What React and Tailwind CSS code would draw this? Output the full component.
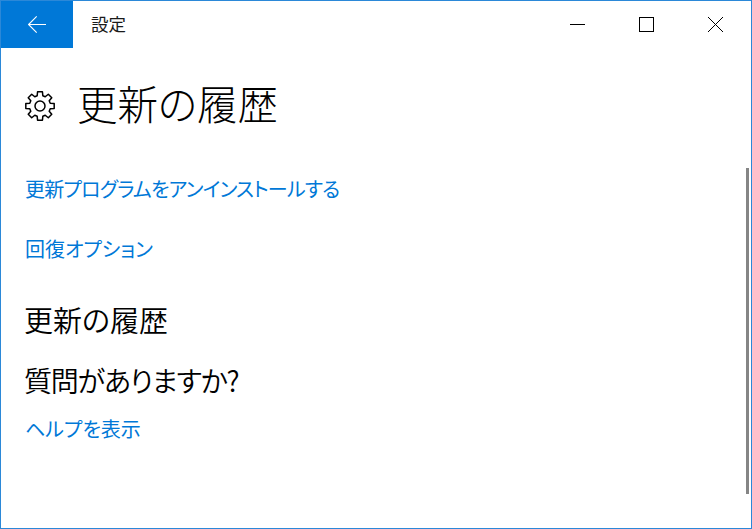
const jp = "font-['Noto_Sans_CJK_JP','Noto_Sans',sans-serif]";

// 8 tooth gear outline, same shape as the settings glyph
const gearPoints = Array.from({ length: 8 }, (_, i) => {
  const a = (i * Math.PI) / 4;
  return [
    [-0.27, 10.6],
    [-0.17, 14.4],
    [0.17, 14.4],
    [0.27, 10.6],
  ]
    .map(([d, r]) => `${(15 + r * Math.sin(a + d)).toFixed(2)},${(15 - r * Math.cos(a + d)).toFixed(2)}`)
    .join(" ");
}).join(" ");

function Gear() {
  return (
    <svg width="30" height="30" viewBox="0 0 30 30" fill="none" stroke="#000" strokeWidth="1.5" strokeLinejoin="round">
      <polygon points={gearPoints} />
      <circle cx="15" cy="15" r="5" />
    </svg>
  );
}

export default function App() {
  return (
    <div className={`relative w-[752px] h-[529px] bg-white border border-[#2b88d8] overflow-hidden flex flex-col ${jp} [font-feature-settings:'palt']`}>
      {/* Title bar */}
      <div className="flex items-center h-[47px] shrink-0">
        <button className="w-[72px] h-full bg-[#0078d7] flex items-center justify-center">
          <svg width="18" height="17" viewBox="0 0 18 17" fill="none" stroke="white" strokeWidth="1.1">
            <path d="M.5 8.5H18M8.7 .4 .6 8.5l8.1 8.1" />
          </svg>
        </button>
        <span className="ml-[18px] -mt-[1px] text-[17.5px] text-[#1a1a1a]">設定</span>
        <div className="ml-auto flex items-center h-full">
          <svg className="mr-[54px]" width="15" height="15" viewBox="0 0 15 15" stroke="#000" fill="none">
            <path d="M0 7.5h15" />
          </svg>
          <svg className="mr-[54px]" width="15" height="15" viewBox="0 0 15 15" stroke="#000" fill="none">
            <rect x=".5" y=".5" width="14" height="14" />
          </svg>
          <svg className="mr-[28px]" width="15" height="15" viewBox="0 0 15 15" stroke="#000" fill="none">
            <path d="M0 0l15 15M15 0 0 15" />
          </svg>
        </div>
      </div>

      {/* Content */}
      <div className="flex flex-col items-start pl-[24px]">
        <div className="flex items-center mt-[28px] h-[60px]">
          <Gear />
          <h1 className="ml-[22px] -mt-[6px] text-[40.5px] leading-[60px] font-light text-black">更新の履歴</h1>
        </div>
        <a className="mt-[38px] text-[20px] leading-[30px] tracking-[-0.78px] text-[#0078d7]">更新プログラムをアンインストールする</a>
        <a className="mt-[30px] text-[20px] leading-[30px] text-[#0078d7]">回復オプション</a>
        <h2 className="mt-[35px] -ml-[1px] text-[29px] leading-[40px] font-[350] text-black">更新の履歴</h2>
        <h2 className="mt-[21px] -ml-[1px] text-[28px] leading-[40px] tracking-[-1.2px] font-[350] text-black">質問がありますか?</h2>
        <a className="mt-[14px] text-[20px] leading-[30px] text-[#0078d7]">ヘルプを表示</a>
      </div>

      {/* Scrollbar */}
      <div className="absolute right-[2px] top-[167px] w-[3px] h-[326px] bg-[#858585]" />
    </div>
  );
}
